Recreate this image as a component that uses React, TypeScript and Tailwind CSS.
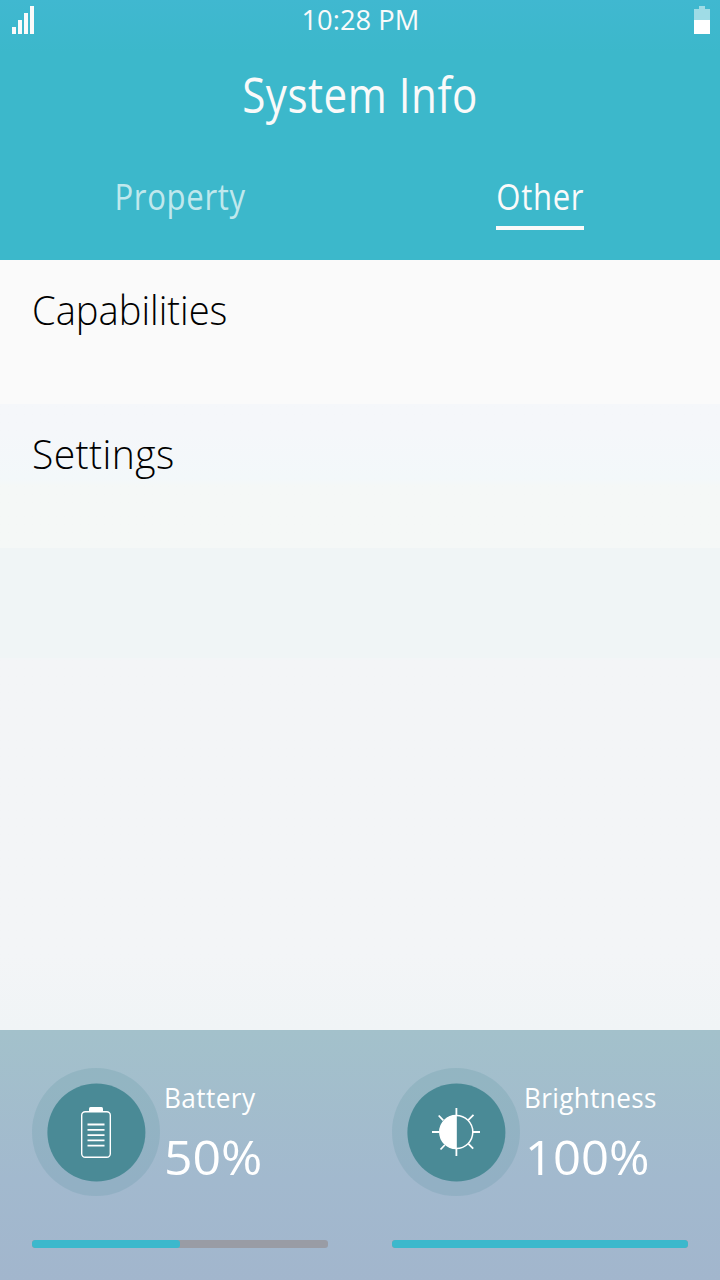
import type { ReactNode } from "react";

function SignalIcon() {
  return (
    <div className="flex h-7 items-end gap-0.5">
      <span className="h-[7px] w-1 bg-[#fafafa]" />
      <span className="h-[14px] w-1 bg-[#fafafa]" />
      <span className="h-[21px] w-1 bg-[#fafafa]" />
      <span className="h-7 w-1 bg-[#fafafa]" />
    </div>
  );
}

function StatusBatteryIcon() {
  return (
    <div className="flex w-4 flex-col items-center">
      <span className="h-[3px] w-1.5 bg-[#9fdce6]" />
      <span className="h-[11px] w-4 bg-[#9fdce6]" />
      <span className="h-[14px] w-4 bg-white" />
    </div>
  );
}

function BatteryGlyph() {
  return (
    <svg width="128" height="128" viewBox="0 0 128 128" fill="none" stroke="white">
      <circle cx="64" cy="64" r="64" fill="#4a8a97" fillOpacity="0.17" stroke="none" />
      <circle cx="64.4" cy="64.5" r="49" fill="#4a8a96" stroke="none" />
      <path d="M57 43v-2.5a1.5 1.5 0 0 1 1.5-1.5h11a1.5 1.5 0 0 1 1.5 1.5V43z" fill="white" stroke="none" />
      <rect x="49.7" y="43.7" width="28.6" height="45.6" rx="3.5" strokeWidth="1.4" />
      <path d="M55.5 56.5h17M55.5 61.8h17M55.5 67.1h17M55.5 72.4h17M55.5 77.7h17" strokeWidth="1.8" />
    </svg>
  );
}

function BrightnessGlyph() {
  return (
    <svg width="128" height="128" viewBox="0 0 128 128" fill="none" stroke="white">
      <circle cx="64" cy="64" r="64" fill="#4a8a97" fillOpacity="0.17" stroke="none" />
      <circle cx="64.4" cy="64.5" r="49" fill="#4a8a96" stroke="none" />
      <circle cx="64.3" cy="64" r="16.5" strokeWidth="1.5" />
      <path d="M64.8 47a17 17 0 0 0 0 34z" fill="white" stroke="none" />
      <path
        d="M64.4 40v7M64.4 81v7M40 64h7.5M81 64h7M46.7 47.5l4.6 4.8M81.5 46.8l-5.3 5.3M48.5 81.5l4.3-4.5M81.2 80.7l-4.7-4.9"
        strokeWidth="1.8"
      />
    </svg>
  );
}

type MeterProps = { glyph: ReactNode; label: ReactNode; value: ReactNode; percent: number };

function Meter({ glyph, label, value, percent }: MeterProps) {
  return (
    <section className="flex w-[360px] flex-col px-8 pt-[38px]">
      <div className="flex h-32">
        {glyph}
        <div className="flex flex-col items-start pt-[9px] pl-1 whitespace-nowrap text-white">
          <div className="h-[42px] text-[27px] leading-[42px]">{label}</div>
          <div className="mt-[8px] h-[60px] text-[48px] leading-[60px]">{value}</div>
        </div>
      </div>
      <div className="mt-11 h-2 overflow-hidden rounded-[3px] bg-[#999ca5]">
        <div className="h-full rounded-[3px] bg-[#3cb8cc]" style={{ width: `${percent}%` }} />
      </div>
    </section>
  );
}

export default function App() {
  return (
    <main className="flex h-[1280px] w-[720px] flex-col overflow-hidden bg-[#f3f5f7] font-['Open_Sans','Noto_Sans',sans-serif]">
      <header className="flex h-[260px] flex-col bg-linear-to-b from-[#40b8d0] to-[#3cb8cb] to-20% text-[#fafafa]">
        <div className="flex h-10 items-start justify-between pt-1.5 pr-2.5 pl-3">
          <SignalIcon />
          <time className="-mt-1.5 -ml-2 h-[38px] text-[28px] leading-[39px]">
            <span className="inline-block origin-center scale-x-[0.975]">10:28 PM</span>
          </time>
          <StatusBatteryIcon />
        </div>
        <h1 className="h-[106px] text-center text-[49px] leading-[108px] font-normal">
          <span className="ml-px inline-block origin-center scale-x-[0.86] tracking-[0.6px]">System Info</span>
        </h1>
        <nav className="grid grid-cols-2 pt-[20px] text-[37px] leading-[60px]">
          <div className="flex flex-col items-center text-[#c0e8ed]">
            <span className="ml-px inline-block origin-center scale-x-[0.84] tracking-[0.8px]">Property</span>
          </div>
          <div className="flex flex-col items-center">
            <span className="ml-px inline-block origin-center scale-x-[0.84] tracking-[0.8px]">Other</span>
            <span className="h-1 w-[88px] bg-[#fafafa]" />
          </div>
        </nav>
      </header>

      <ul className="h-[398px] text-[39.5px] leading-[100px] font-light text-black">
        <li className="h-36 bg-[#fafafa] pl-8">
          <span className="inline-block origin-left scale-x-[0.965]">Capabilities</span>
        </li>
        <li className="h-36 bg-linear-to-b from-[#f5f7fa] from-20% via-[#f3f8fa] via-52% to-[#f5f8f7] to-57% pl-8">
          <span className="inline-block origin-left scale-x-[0.99] tracking-[0.4px]">Settings</span>
        </li>
        <li className="h-[110px] bg-[#f0f5f6]" />
      </ul>
      <div className="h-[372px] bg-linear-to-b from-[#f3f5f7] from-80% to-[#f0f4f6]" />

      <footer className="flex h-[250px] bg-linear-to-b from-[#a3c1cb] via-[#a2b9ce] via-60% to-[#a2b6cd]">
        <Meter
          glyph={<BatteryGlyph />}
          label={<span className="inline-block origin-left scale-x-[0.97] tracking-[0.4px]">Battery</span>}
          value={<span className="inline-block origin-left scale-x-[1.04]">50%</span>}
          percent={50}
        />
        <Meter
          glyph={<BrightnessGlyph />}
          label={<span className="inline-block origin-left scale-x-[0.965] tracking-[0.4px]">Brightness</span>}
          value={<span className="ml-px inline-block origin-left scale-x-[1.02]">100%</span>}
          percent={100}
        />
      </footer>
    </main>
  );
}
